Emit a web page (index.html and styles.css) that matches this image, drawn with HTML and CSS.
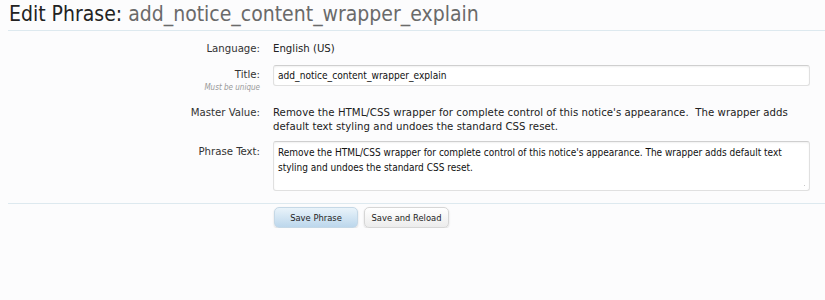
FILE: index.html
```html
<!DOCTYPE html>
<html>
<head>
<meta charset="utf-8">
<link rel="stylesheet" href="styles.css">
</head>
<body>
<h1 class="title-bar">Edit Phrase: <span class="phrase-name">add_notice_content_wrapper_explain</span></h1>
<form class="phrase-form">
  <div class="row row-language">
    <div class="label">Language:</div>
    <div class="value">English (US)</div>
  </div>
  <div class="row row-title">
    <div class="label">Title:<div class="hint">Must be unique</div></div>
    <div class="value"><div class="text-input" role="textbox" contenteditable="true">add_notice_content_wrapper_explain</div></div>
  </div>
  <div class="row row-master">
    <div class="label">Master Value:</div>
    <div class="value master-text">Remove the HTML/CSS wrapper for complete control of this notice's appearance.&nbsp; The wrapper adds default text styling and undoes the standard CSS reset.</div>
  </div>
  <div class="row row-phrase">
    <div class="label">Phrase Text:</div>
    <div class="value"><textarea class="text-area">Remove the HTML/CSS wrapper for complete control of this notice's appearance. The wrapper adds default text styling and undoes the standard CSS reset.</textarea></div>
  </div>
  <div class="submit-unit">
    <button type="button" class="btn btn-primary">Save Phrase</button>
    <button type="button" class="btn">Save and Reload</button>
  </div>
</form>
</body>
</html>
```
FILE: styles.css
```css
html, body {
  margin: 0;
  padding: 0;
  background: #fcfcfd;
}
body {
  font-family: "DejaVu Sans Condensed", "DejaVu Sans", sans-serif;
  font-size: 11.3px;
  color: #222;
}
.title-bar {
  margin: 0 0 0 8px;
  padding: 3px 0 4px 1px;
  font-family: "DejaVu Sans Condensed", "DejaVu Sans", sans-serif;
  font-weight: normal;
  font-size: 21px;
  line-height: 23px;
  color: #222;
  border-bottom: 1px solid #dde9ef;
}
.phrase-name {
  color: #6a6a6a;
}
.phrase-form {
  margin: 0 0 0 8px;
  padding-top: 5px;
}
.row {
  display: grid;
  grid-template-columns: 252px 537px;
  column-gap: 13px;
  padding: 5px 0;
}
.label {
  text-align: right;
  color: #333;
  line-height: 14px;
}
.value {
  line-height: 14px;
}
.master-text {
  letter-spacing: 0.05px;
}
.row-language .label, .row-language .value {
  padding-top: 1px;
}
.row-title {
  padding-top: 4px;
}
.row-title .label {
  padding-top: 3px;
}
.hint {
  font-size: 8px;
  font-style: italic;
  color: #999;
  line-height: 12px;
}
.text-input {
  box-sizing: border-box;
  width: 537px;
  height: 21px;
  margin: 0;
  padding: 0 4px;
  font-size: 10.1px;
  line-height: 19px;
  color: #111;
  background: #fff;
  border: 1px solid #e0e0e0;
  border-top-color: #cfcfcf;
  border-radius: 3px;
  box-shadow: inset 0 1px 2px rgba(0,0,0,0.06);
  outline: none;
  white-space: nowrap;
  overflow: hidden;
}
.row-master {
  padding-top: 7px;
}
.row-phrase {
  padding-top: 2px;
}
.row-phrase .label {
  padding-top: 4px;
}
.text-area {
  display: block;
  box-sizing: border-box;
  width: 537px;
  height: 50px;
  margin: 0;
  padding: 3px 4px;
  font-family: "DejaVu Sans Condensed", "DejaVu Sans", sans-serif;
  font-size: 10px;
  line-height: 15px;
  color: #111;
  background-color: #fff;
  background-image:
    radial-gradient(circle, #c8c8c8 0.8px, transparent 1px);
  background-size: 3px 3px;
  background-repeat: no-repeat;
  background-position: right 3px bottom 3px;
  border: 1px solid #e0e0e0;
  border-top-color: #cfcfcf;
  border-radius: 3px;
  box-shadow: inset 0 1px 2px rgba(0,0,0,0.06);
  resize: none;
  outline: none;
}
.submit-unit {
  margin-top: 7px;
  border-top: 1px solid #dde9ef;
  padding: 3px 0 0 266px;
  display: flex;
  gap: 6px;
}
.btn {
  width: 85px;
  height: 21px;
  padding: 0;
  font-family: "DejaVu Sans Condensed", "DejaVu Sans", sans-serif;
  font-size: 9.3px;
  color: #222;
  border: 1px solid #d6d6d6;
  border-radius: 5px;
  background: linear-gradient(#ffffff, #ececec);
  box-shadow: 0 1px 2px rgba(0,0,0,0.15);
}
.btn-primary {
  width: 84px;
  border-color: #c5d8e6;
  background: linear-gradient(#e9f3fa, #bcd7ec);
}
```
